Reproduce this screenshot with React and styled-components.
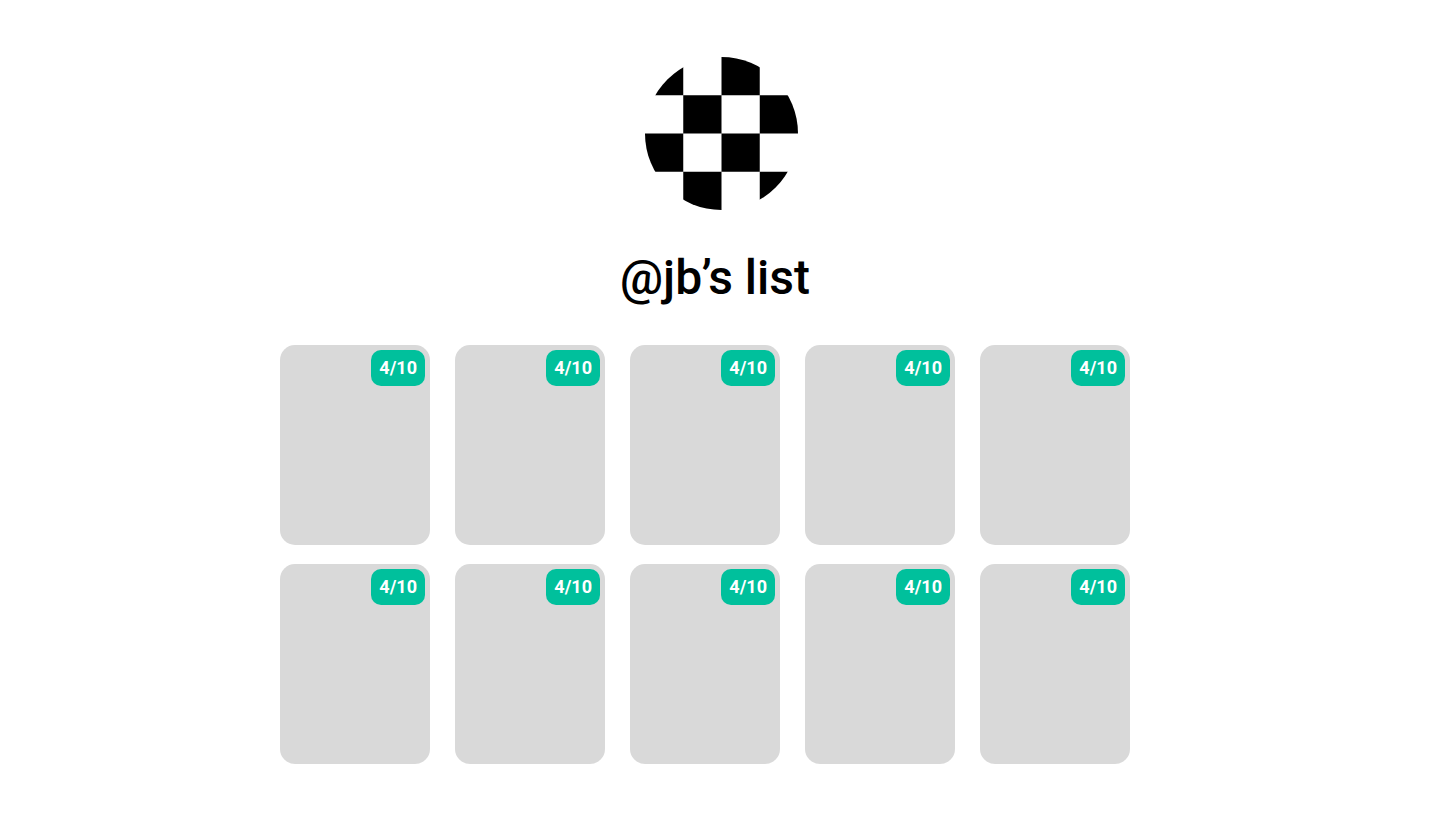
import React from "react";
import styled, { createGlobalStyle } from "styled-components";

const GlobalStyle = createGlobalStyle`
  * { box-sizing: border-box; }
  body {
    margin: 0;
    background: #ffffff;
    color: #000000;
    font-family: Roboto, "Liberation Sans", sans-serif;
  }
`;

const Page = styled.main`
  display: flex;
  flex-direction: column;
  align-items: center;
  padding: 57px 30px 61px 0;
`;

const Header = styled.header`
  display: flex;
  flex-direction: column;
  align-items: center;
`;

const Avatar = styled.svg`
  display: block;
  width: 153px;
  height: 153px;
  margin-left: 33px;
  margin-right: 0;
`;

const Title = styled.h1`
  margin: 40px 0 39px 20px;
  font-size: 48px;
  line-height: 56px;
  font-weight: 500;
`;

const Grid = styled.ul`
  display: grid;
  grid-template-columns: repeat(5, 150px);
  gap: 19px 25px;
  margin: 0;
  padding: 0;
  list-style: none;
`;

const Card = styled.li`
  display: flex;
  justify-content: flex-end;
  align-items: flex-start;
  height: 200px;
  padding: 5px;
  border-radius: 15px;
  background: #d9d9d9;
`;

const Score = styled.span`
  padding: 8px;
  border-radius: 10px;
  background: #00c09c;
  color: #ffffff;
  font-size: 18px;
  line-height: 20px;
  font-weight: 700;
`;

const scores = Array.from({ length: 10 }, (_, id) => ({ id, value: "4/10" }));

export default function App() {
  return (
    <>
      <GlobalStyle />
      <Page>
        <Header>
          <Avatar viewBox="0 0 4 4" role="img" aria-label="Profile picture">
            <clipPath id="disc">
              <circle cx="2" cy="2" r="2" />
            </clipPath>
            <path
              clipPath="url(#disc)"
              d="M0 0h1v1H0zM2 0h1v1H2zM1 1h1v1H1zM3 1h1v1H3zM0 2h1v1H0zM2 2h1v1H2zM1 3h1v1H1zM3 3h1v1H3z"
            />
          </Avatar>
          <Title>@jb’s list</Title>
        </Header>
        <Grid>
          {scores.map(({ id, value }) => (
            <Card key={id}>
              <Score>{value}</Score>
            </Card>
          ))}
        </Grid>
      </Page>
    </>
  );
}
